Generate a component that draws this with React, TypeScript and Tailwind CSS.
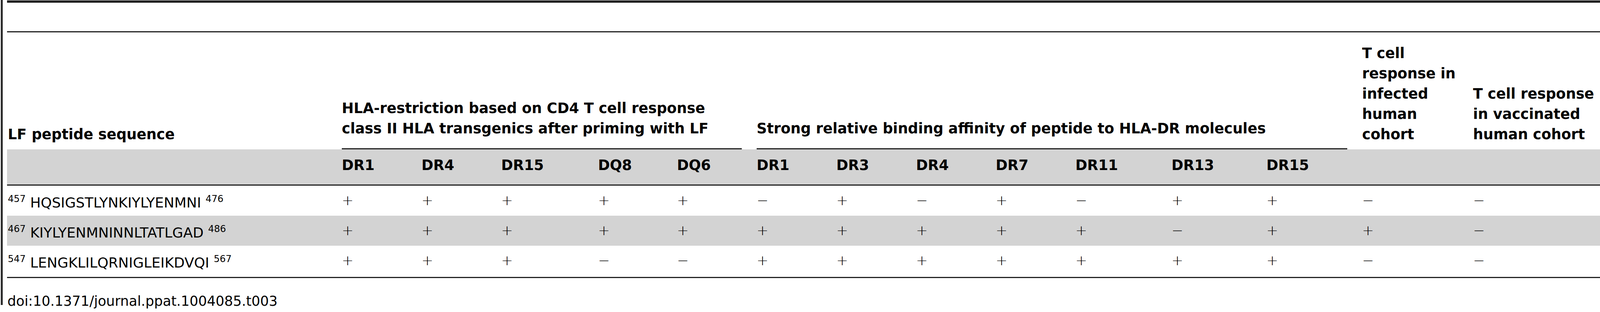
const cols =
  "grid grid-cols-[857px_204px_204px_248px_202px_204px_204px_204px_204px_204px_246px_243px_245px_284px_1fr]"

const alleles = ["DR1", "DR4", "DR15", "DQ8", "DQ6", "DR1", "DR3", "DR4", "DR7", "DR11", "DR13", "DR15"]

type Row = { start: string; seq: string; end: string; values: string[] }

const P = "+"
const M = "\u2212"

const rows: Row[] = [
  {
    start: "457",
    seq: "HQSIGSTLYNKIYLYENMNI",
    end: "476",
    values: [P, P, P, P, P, M, P, M, P, M, P, P, M, M],
  },
  {
    start: "467",
    seq: "KIYLYENMNINNLTATLGAD",
    end: "486",
    values: [P, P, P, P, P, P, P, P, P, P, M, P, P, M],
  },
  {
    start: "547",
    seq: "LENGKLILQRNIGLEIKDVQI",
    end: "567",
    values: [P, P, P, M, M, P, P, P, P, P, P, P, M, M],
  },
]

export default function App() {
  return (
    <div className="flex w-full h-[800px] overflow-hidden bg-white text-black font-['DejaVu_Sans',sans-serif]">
      <div className="ml-[2px] w-[5px] h-[782px] shrink-0 bg-[#2a2a2a]" />
      <div className="ml-[11px] flex-1 min-w-0 flex flex-col">
        <div className="mt-[1px] border-t-[6px] border-[#222]" />
        <div className="h-[73px]" />
        <div className="border-t-[3px] border-[#222]" />

        {/* header row */}
        <div className={`${cols} h-[300px] items-end text-[36.5px] font-bold leading-[52px]`}>
          <div className="pl-[2px] pb-[12px] whitespace-nowrap">LF peptide sequence</div>
          <div className="col-span-5 pr-[38px]">
            <div className="border-b-[3px] border-[#222] pb-[24px] whitespace-nowrap">
              HLA-restriction based on CD4 T cell response
              <br />
              class II HLA transgenics after priming with LF
            </div>
          </div>
          <div className="col-span-7 pr-[38px]">
            <div className="border-b-[3px] border-[#222] pb-[24px] whitespace-nowrap">
              Strong relative binding affinity of peptide to HLA-DR molecules
            </div>
          </div>
          <div className="pb-[12px] whitespace-nowrap">
            T cell
            <br />
            response in
            <br />
            infected
            <br />
            human
            <br />
            cohort
          </div>
          <div className="pb-[12px] whitespace-nowrap">
            T cell response
            <br />
            in vaccinated
            <br />
            human cohort
          </div>
        </div>

        {/* allele row */}
        <div className={`${cols} h-[93px] bg-[#d3d3d3] border-b-[3px] border-[#222] text-[36.5px] font-bold leading-[52px]`}>
          <div />
          {alleles.map((a, i) => (
            <div key={i} className="pt-[15px] whitespace-nowrap">
              {a}
            </div>
          ))}
          <div />
          <div />
        </div>

        {/* body rows */}
        {rows.map((row, r) => (
          <div
            key={row.start}
            className={`${cols} text-[36px] leading-[42px] ${r === 1 ? "bg-[#d3d3d3]" : ""} ${
              r === 2 ? "h-[83px] border-b-[3px] border-[#222]" : "h-[77px]"
            }`}
          >
            <div className="pl-[2px] pt-[13px] whitespace-nowrap">
              <span className="text-[24px] align-[14px]">{row.start}</span> {row.seq}{" "}
              <span className="text-[24px] align-[14px]">{row.end}</span>
            </div>
            {row.values.map((v, i) => (
              <div key={i} className="pt-[17px] font-extralight">
                {v}
              </div>
            ))}
          </div>
        ))}

        <div className="mt-[38px] pl-[1px] text-[35px] leading-[42px] whitespace-nowrap">
          doi:10.1371/journal.ppat.1004085.t003
        </div>
      </div>
    </div>
  )
}
